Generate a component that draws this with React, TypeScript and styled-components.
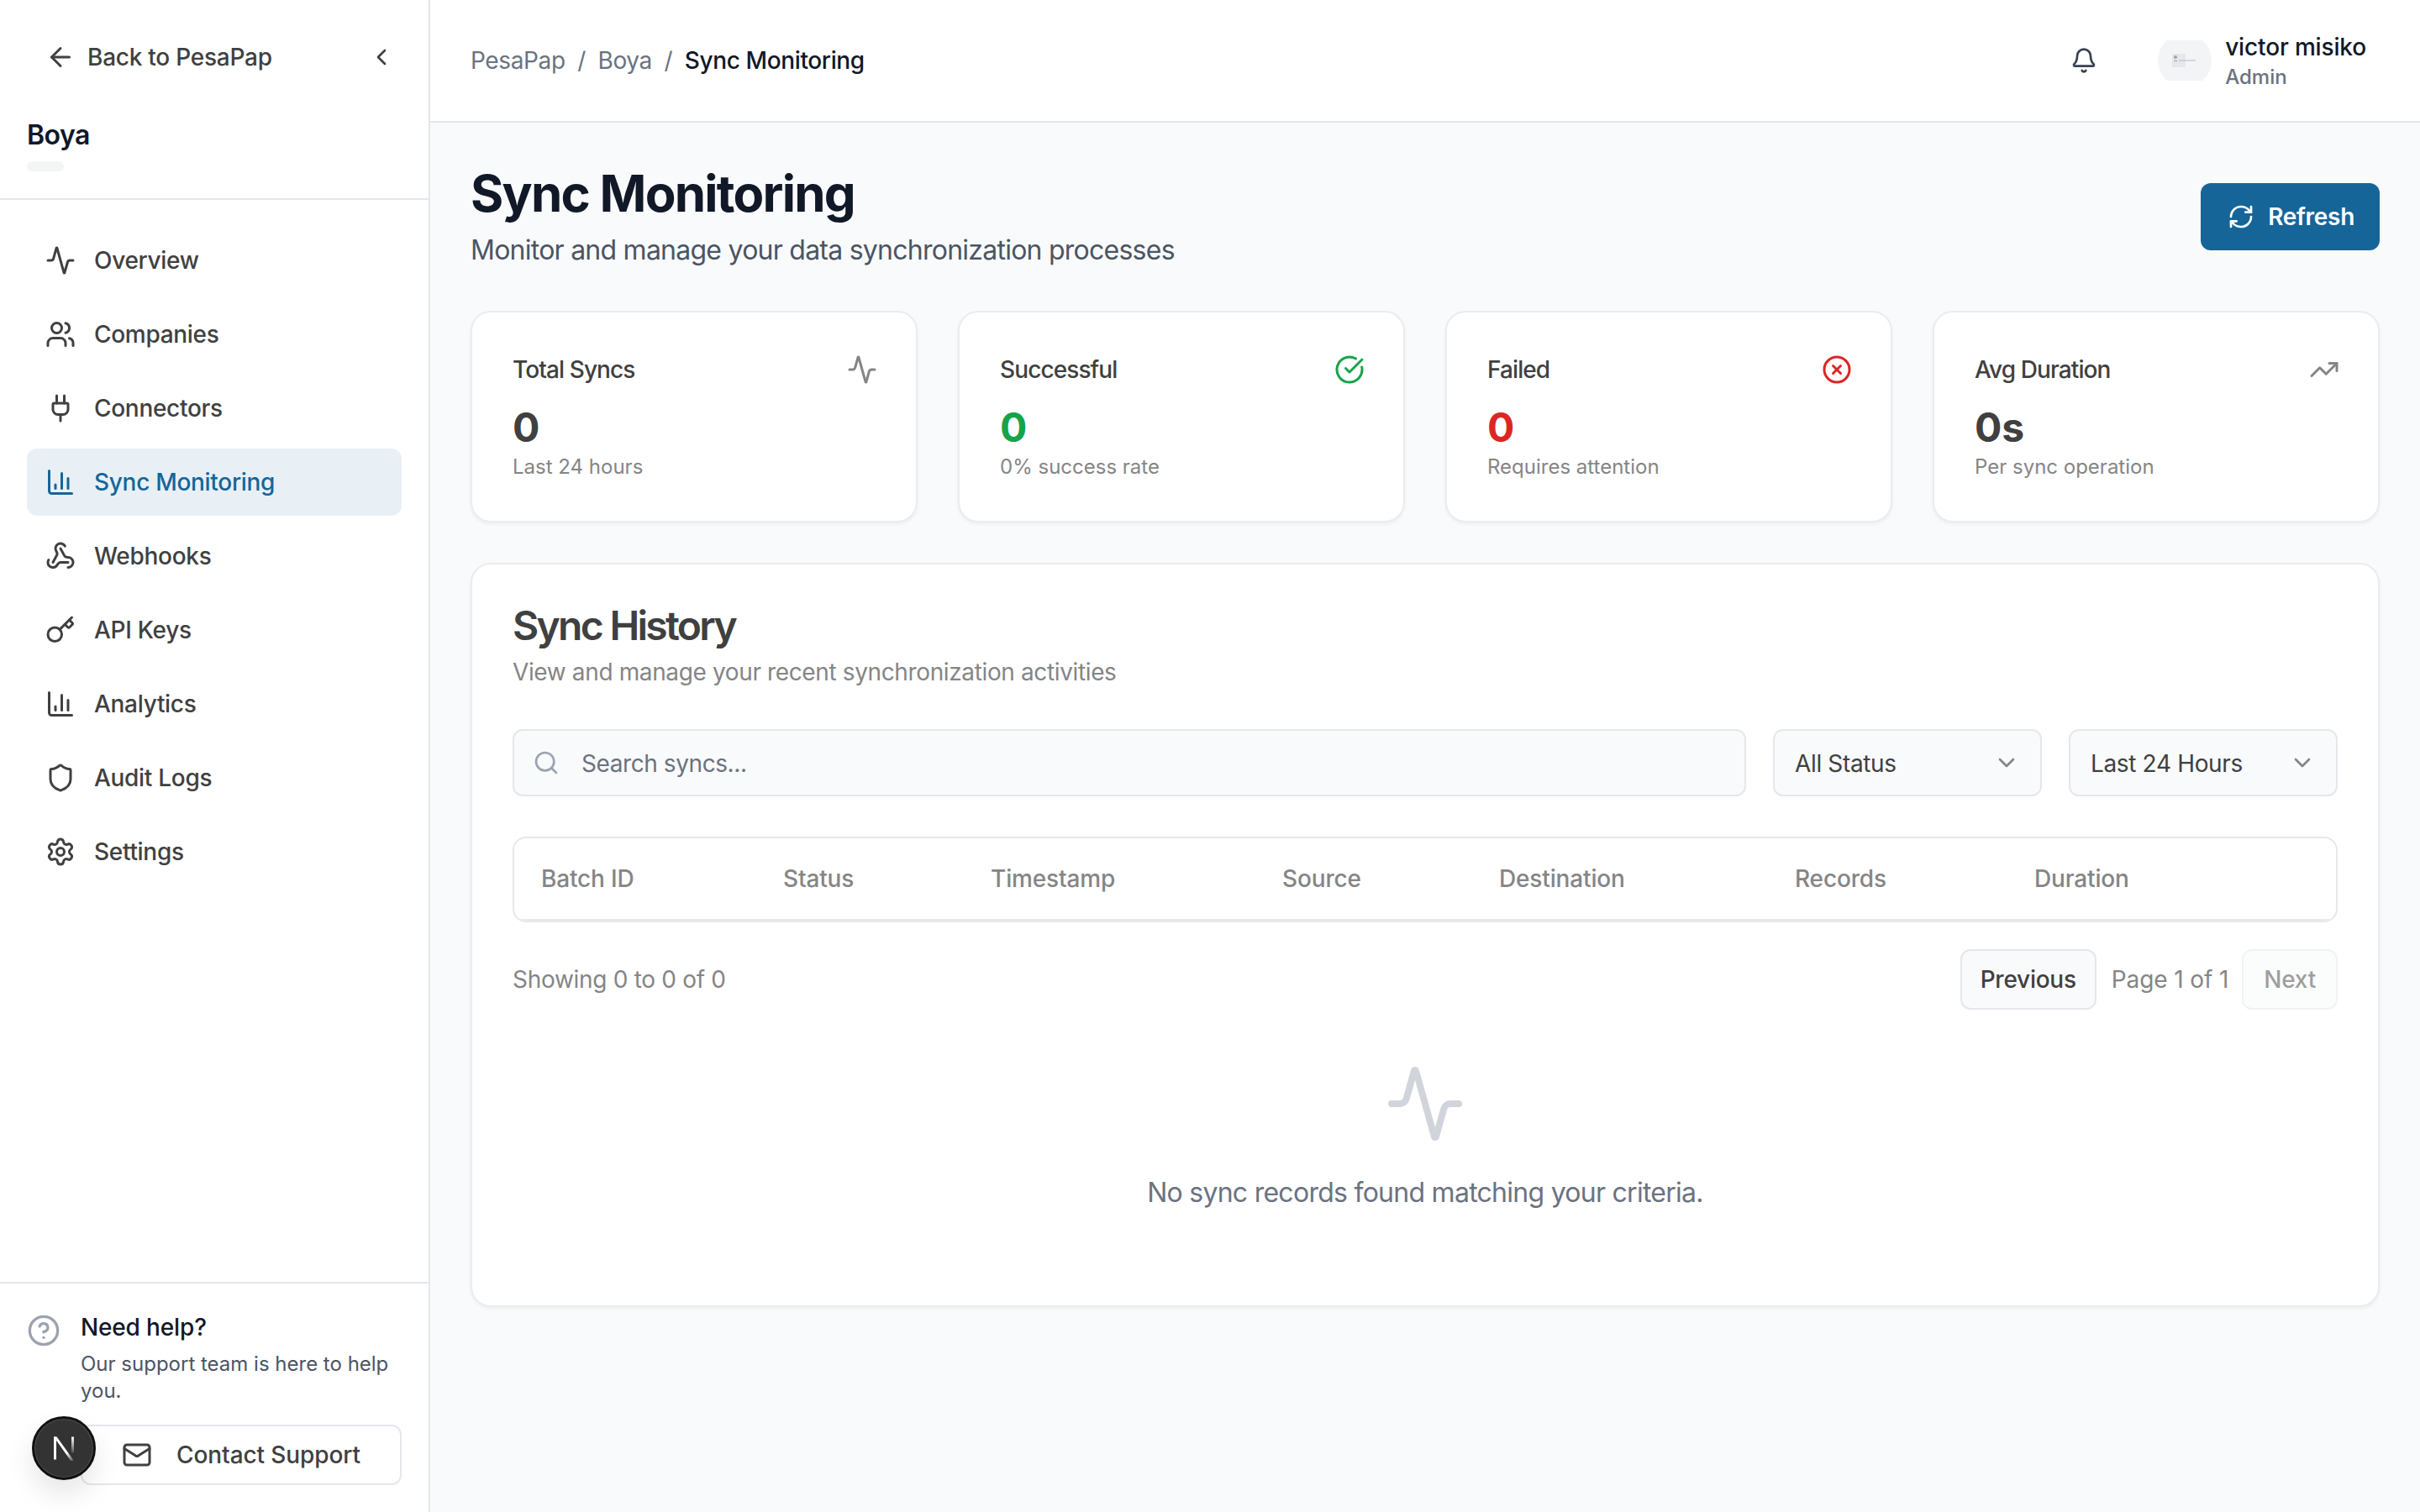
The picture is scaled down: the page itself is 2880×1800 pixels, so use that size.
import * as React from 'react'
import styled, { createGlobalStyle } from 'styled-components'
import {
  Activity,
  ArrowLeft,
  Bell,
  ChartColumn,
  ChevronDown,
  ChevronLeft,
  CircleCheckBig,
  CircleHelp,
  CircleX,
  Key,
  Mail,
  Plug,
  RefreshCw,
  Search,
  Settings,
  Shield,
  TrendingUp,
  Users,
  Webhook,
} from 'lucide-react'

const BRAND = '#166599'

const navItems = [
  { label: 'Overview', icon: Activity },
  { label: 'Companies', icon: Users },
  { label: 'Connectors', icon: Plug },
  { label: 'Sync Monitoring', icon: ChartColumn, active: true },
  { label: 'Webhooks', icon: Webhook },
  { label: 'API Keys', icon: Key },
  { label: 'Analytics', icon: ChartColumn },
  { label: 'Audit Logs', icon: Shield },
  { label: 'Settings', icon: Settings },
]

const stats = [
  { title: 'Total Syncs', value: '0', note: 'Last 24 hours', icon: Activity, tone: '#858585', valueTone: '#404040' },
  { title: 'Successful', value: '0', note: '0% success rate', icon: CircleCheckBig, tone: '#16a34a', valueTone: '#16a34a' },
  { title: 'Failed', value: '0', note: 'Requires attention', icon: CircleX, tone: '#dc2626', valueTone: '#dc2626' },
  { title: 'Avg Duration', value: '0s', note: 'Per sync operation', icon: TrendingUp, tone: '#858585', valueTone: '#404040' },
]

const columns = ['Batch ID', 'Status', 'Timestamp', 'Source', 'Destination', 'Records', 'Duration']

const App = () => (
  <Page>
    <GlobalStyle />
    <Sidebar>
      <SidebarTop>
        <BackRow>
          <BackLink>
            <ArrowLeft size={36} strokeWidth={2} />
            Back to PesaPap
          </BackLink>
          <ChevronLeft size={32} />
        </BackRow>
        <CompanyName>Boya</CompanyName>
        <CompanyPill />
      </SidebarTop>
      <Nav>
        {navItems.map(item => (
          <NavItem key={item.label} $active={item.active}>
            <item.icon size={36} />
            {item.label}
          </NavItem>
        ))}
      </Nav>
      <SidebarFooter>
        <HelpIcon>
          <CircleHelp size={40} />
        </HelpIcon>
        <HelpBody>
          <HelpTitle>Need help?</HelpTitle>
          <HelpText>Our support team is here to help you.</HelpText>
          <ContactButton>
            <Mail size={36} />
            Contact Support
          </ContactButton>
        </HelpBody>
      </SidebarFooter>
    </Sidebar>

    <Main>
      <TopBar>
        <Breadcrumbs>
          <Crumb>PesaPap</Crumb>
          <Crumb>/</Crumb>
          <Crumb>Boya</Crumb>
          <Crumb>/</Crumb>
          <Crumb $current>Sync Monitoring</Crumb>
        </Breadcrumbs>
        <TopActions>
          <Bell size={32} color="#374151" />
          <UserBlock>
            <Avatar>
              <AvatarThumb>
                <svg width="30" height="16" viewBox="0 0 30 16">
                  <circle cx="4" cy="4" r="2" fill="#9ca3af" />
                  <rect x="2" y="8" width="4" height="1" fill="#9ca3af" />
                  <rect x="8" y="7.5" width="20" height="1" fill="#b6bac2" />
                </svg>
              </AvatarThumb>
            </Avatar>
            <UserText>
              <UserName>victor misiko</UserName>
              <UserRole>Admin</UserRole>
            </UserText>
          </UserBlock>
        </TopActions>
      </TopBar>

      <Content>
        <PageHead>
          <div>
            <PageTitle>Sync Monitoring</PageTitle>
            <PageSubtitle>Monitor and manage your data synchronization processes</PageSubtitle>
          </div>
          <RefreshButton>
            <RefreshCw size={32} />
            Refresh
          </RefreshButton>
        </PageHead>

        <StatGrid>
          {stats.map(stat => (
            <StatCard key={stat.title}>
              <StatHead>
                <StatTitle>{stat.title}</StatTitle>
                <stat.icon size={36} color={stat.tone} />
              </StatHead>
              <StatValue $tone={stat.valueTone}>{stat.value}</StatValue>
              <StatNote>{stat.note}</StatNote>
            </StatCard>
          ))}
        </StatGrid>

        <HistoryCard>
          <HistoryTitle>Sync History</HistoryTitle>
          <HistorySubtitle>View and manage your recent synchronization activities</HistorySubtitle>

          <Filters>
            <SearchBox>
              <Search size={32} color="#9ca3af" />
              Search syncs...
            </SearchBox>
            <SelectBox>
              All Status
              <ChevronDown size={32} color="#858585" />
            </SelectBox>
            <SelectBox>
              Last 24 Hours
              <ChevronDown size={32} color="#858585" />
            </SelectBox>
          </Filters>

          <TableFrame>
            <HeaderRow>
              {columns.map(col => (
                <HeaderCell key={col}>{col}</HeaderCell>
              ))}
            </HeaderRow>
          </TableFrame>

          <Pagination>
            <PageInfo>Showing 0 to 0 of 0</PageInfo>
            <PageControls>
              <PageButton>Previous</PageButton>
              <PageLabel>Page 1 of 1</PageLabel>
              <PageButton $disabled>Next</PageButton>
            </PageControls>
          </Pagination>

          <EmptyState>
            <Activity size={96} color="#d1d5db" />
            <EmptyText>No sync records found matching your criteria.</EmptyText>
          </EmptyState>
        </HistoryCard>
      </Content>
    </Main>

    <DevBadge>
      <svg width="32" height="32" viewBox="0 0 32 32" fill="none">
        <defs>
          <linearGradient id="nDiag" x1="0" y1="0" x2="1" y2="1">
            <stop offset="0.65" stopColor="#fff" />
            <stop offset="1" stopColor="#fff" stopOpacity="0.1" />
          </linearGradient>
          <linearGradient id="nStem" x1="0" y1="0" x2="0" y2="1">
            <stop offset="0" stopColor="#fff" />
            <stop offset="1" stopColor="#fff" stopOpacity="0.15" />
          </linearGradient>
        </defs>
        <path d="M4 2.5h3v27H4z" fill="#fff" />
        <path d="M4 2.5h3.6L28 31h-3.8z" fill="url(#nDiag)" />
        <rect x="25" y="2.5" width="3" height="19" fill="url(#nStem)" />
      </svg>
    </DevBadge>
  </Page>
)

export default App

const GlobalStyle = createGlobalStyle`
  * {
    box-sizing: border-box;
  }

  html,
  body {
    margin: 0;
    padding: 0;
    background: #f9fafb;
    font-family: Inter, 'Liberation Sans', sans-serif;
    -webkit-font-smoothing: antialiased;
  }
`

const Page = styled.div`
  position: relative;
  display: flex;
  width: 100%;
  height: 100vh;
  overflow: hidden;
`

const Sidebar = styled.aside`
  display: flex;
  flex-direction: column;
  flex: 0 0 512px;
  background: #fff;
  border-right: 2px solid #e5e7eb;
`

const SidebarTop = styled.div`
  padding: 48px 32px 32px;
  border-bottom: 2px solid #e5e7eb;
`

const BackRow = styled.div`
  display: flex;
  align-items: center;
  justify-content: space-between;
  height: 40px;
  padding: 0 8px 0 22px;
  color: #404040;
`

const BackLink = styled.div`
  display: flex;
  align-items: center;
  gap: 14px;
  font-size: 28px;
  font-weight: 500;
  letter-spacing: -0.25px;
`

const CompanyName = styled.div`
  margin-top: 48px;
  font-size: 32px;
  line-height: 50px;
  font-weight: 600;
  letter-spacing: -0.5px;
  color: #111827;
`

const CompanyPill = styled.div`
  width: 44px;
  height: 12px;
  margin-top: 6px;
  border-radius: 6px;
  background: #f3f4f6;
`

const Nav = styled.nav`
  display: flex;
  flex-direction: column;
  flex: 1;
  gap: 8px;
  padding: 32px 32px 0;
`

const NavItem = styled.a<{ $active?: boolean }>`
  display: flex;
  align-items: center;
  gap: 22px;
  height: 80px;
  padding: 0 22px;
  border-radius: 12px;
  font-size: 28px;
  font-weight: 500;
  letter-spacing: -0.3px;
  color: ${p => (p.$active ? BRAND : '#404040')};
  background: ${p => (p.$active ? '#e8f0f5' : 'transparent')};
`

const SidebarFooter = styled.div`
  display: flex;
  gap: 24px;
  padding: 32px;
  border-top: 2px solid #e5e7eb;
`

const HelpIcon = styled.div`
  flex: none;
  height: 40px;
  margin-top: 4px;
  color: #9ca3af;
`

const HelpBody = styled.div`
  flex: 1;
`

const HelpTitle = styled.div`
  font-size: 28px;
  line-height: 40px;
  font-weight: 500;
  letter-spacing: -0.15px;
  color: #111827;
`

const HelpText = styled.p`
  margin: 8px 0 0;
  font-size: 24px;
  line-height: 32px;
  color: #4b5563;
`

const ContactButton = styled.button`
  display: flex;
  align-items: center;
  justify-content: center;
  gap: 29px;
  width: 100%;
  height: 72px;
  margin-top: 24px;
  background: #fff;
  border: 2px solid #e5e7eb;
  border-radius: 12px;
  font: 500 28px Inter, sans-serif;
  letter-spacing: -0.1px;
  color: #404040;
`

const Main = styled.main`
  display: flex;
  flex-direction: column;
  flex: 1;
  min-width: 0;
`

const TopBar = styled.header`
  display: flex;
  align-items: center;
  justify-content: space-between;
  flex: none;
  height: 146px;
  padding: 0 64px 0 48px;
  background: #fff;
  border-bottom: 2px solid #e5e7eb;
`

const Breadcrumbs = styled.div`
  display: flex;
  align-items: center;
  gap: 14.6px;
`

const Crumb = styled.span<{ $current?: boolean }>`
  font-size: 28px;
  letter-spacing: -0.38px;
  font-weight: ${p => (p.$current ? 500 : 400)};
  color: ${p => (p.$current ? '#111827' : '#6b7280')};
`

const TopActions = styled.div`
  display: flex;
  align-items: center;
  gap: 72px;
`

const UserBlock = styled.div`
  display: flex;
  align-items: center;
  gap: 16px;
`

const Avatar = styled.div`
  position: relative;
  display: flex;
  align-items: center;
  justify-content: center;
  width: 64px;
  height: 48px;
  overflow: hidden;

  &::before {
    content: '';
    position: absolute;
    top: -8px;
    left: 0;
    width: 64px;
    height: 64px;
    border-radius: 50%;
    background: #f3f4f6;
  }
`

const AvatarThumb = styled.div`
  position: relative;
  display: flex;
  width: 30px;
  height: 16px;
  background: linear-gradient(90deg, #e5e7eb 55%, transparent 55%);
`

const UserText = styled.div`
  display: flex;
  flex-direction: column;
  padding-top: 2px;
`

const UserName = styled.div`
  font-size: 28px;
  line-height: 36px;
  font-weight: 500;
  letter-spacing: -0.15px;
  color: #111827;
`

const UserRole = styled.div`
  margin-top: 2px;
  font-size: 24px;
  line-height: 32px;
  font-weight: 500;
  color: #6b7280;
`

const Content = styled.div`
  flex: 1;
  padding: 48px;
`

const PageHead = styled.div`
  display: flex;
  align-items: center;
  justify-content: space-between;
  margin-bottom: 48px;
`

const PageTitle = styled.h1`
  margin: 0;
  font-size: 60px;
  line-height: 72px;
  font-weight: 700;
  letter-spacing: -1.75px;
  color: #111827;
`

const PageSubtitle = styled.p`
  margin: 8px 0 0;
  font-size: 32px;
  line-height: 48px;
  letter-spacing: -0.75px;
  color: #4b5563;
`

const RefreshButton = styled.button`
  display: flex;
  align-items: center;
  gap: 16px;
  height: 80px;
  padding: 0 30px 0 32px;
  background: ${BRAND};
  border: 0;
  border-radius: 12px;
  font: 600 28px Inter, sans-serif;
  letter-spacing: -0.3px;
  color: #fff;
`

const StatGrid = styled.div`
  display: grid;
  grid-template-columns: repeat(4, 1fr);
  gap: 48px;
  margin-bottom: 48px;
`

const StatCard = styled.div`
  padding: 48px;
  background: #fff;
  border: 2px solid #ececec;
  border-radius: 24px;
  box-shadow: 0 2px 4px rgba(0, 0, 0, 0.05);
`

const StatHead = styled.div`
  display: flex;
  align-items: center;
  justify-content: space-between;
  height: 40px;
  margin-right: -2px;
`

const StatTitle = styled.div`
  font-size: 28px;
  font-weight: 500;
  letter-spacing: -0.9px;
  color: #404040;
`

const StatValue = styled.div<{ $tone: string }>`
  margin-top: 18px;
  font-size: 48px;
  line-height: 62px;
  font-weight: 700;
  color: ${p => p.$tone};
`

const StatNote = styled.div`
  font-size: 24px;
  line-height: 32px;
  color: #858585;
`

const HistoryCard = styled(StatCard)``

const HistoryTitle = styled.h2`
  margin: 0;
  font-size: 48px;
  line-height: 50px;
  font-weight: 600;
  letter-spacing: -2.7px;
  color: #404040;
`

const HistorySubtitle = styled.p`
  margin: 10px 0 48px;
  font-size: 28px;
  line-height: 40px;
  letter-spacing: -0.37px;
  color: #858585;
`

const Filters = styled.div`
  display: flex;
  gap: 32px;
  margin-bottom: 48px;
`

const SearchBox = styled.div`
  display: flex;
  align-items: center;
  flex: 1;
  gap: 26px;
  height: 80px;
  padding: 2px 22px 0;
  background: #f9fafb;
  border: 2px solid #e5e7eb;
  border-radius: 12px;
  font-size: 28px;
  letter-spacing: -0.42px;
  color: #6b7280;

  svg {
    margin-top: -2px;
  }
`

const SelectBox = styled.div`
  display: flex;
  align-items: center;
  justify-content: space-between;
  flex: 0 0 320px;
  height: 80px;
  padding: 2px 24px 0;
  background: #f9fafb;
  border: 2px solid #e5e7eb;
  border-radius: 12px;
  font-size: 28px;
  letter-spacing: -0.35px;
  color: #404040;

  svg {
    margin-top: -2px;
  }
`

const TableFrame = styled.div`
  border: 2px solid #e8e8e8;
  border-radius: 16px;
  overflow: hidden;
`

const HeaderRow = styled.div`
  display: grid;
  grid-template-columns: 288px 247px 347px 258px 352px 285px 1fr;
  align-items: center;
  height: 98px;
  border-bottom: 2px solid #e8e8e8;
`

const HeaderCell = styled.div`
  padding-left: 32px;
  font-size: 28px;
  font-weight: 500;
  letter-spacing: -0.15px;
  color: #858585;
`

const Pagination = styled.div`
  display: flex;
  align-items: center;
  justify-content: space-between;
  margin-top: 32px;
`

const PageInfo = styled.span`
  font-size: 28px;
  letter-spacing: -0.3px;
  color: #858585;
`

const PageLabel = styled(PageInfo)`
  padding-left: 2px;
  letter-spacing: -0.1px;
`

const PageControls = styled.div`
  display: flex;
  align-items: center;
  gap: 16px;
`

const PageButton = styled.button<{ $disabled?: boolean }>`
  height: 72px;
  padding: 0 ${p => (p.$disabled ? '24px' : '22px')};
  background: #f9fafb;
  border: 2px solid #e5e7eb;
  border-radius: 12px;
  font: 500 28px Inter, sans-serif;
  letter-spacing: -0.25px;
  color: #404040;
  opacity: ${p => (p.$disabled ? 0.5 : 1)};
`

const EmptyState = styled.div`
  display: flex;
  flex-direction: column;
  align-items: center;
  gap: 32px;
  padding: 64px 0 62px;
`

const EmptyText = styled.p`
  margin: 0;
  padding-top: 2px;
  font-size: 32px;
  line-height: 48px;
  letter-spacing: -0.73px;
  color: #6b7280;
`

const DevBadge = styled.div`
  position: absolute;
  left: 38px;
  top: 1686px;
  display: flex;
  align-items: center;
  justify-content: center;
  width: 76px;
  height: 76px;
  border-radius: 50%;
  background: #333;
  border: 3px solid #111;
  box-shadow: inset 0 0 0 1px rgba(255, 255, 255, 0.15), 0 16px 32px rgba(0, 0, 0, 0.1);
`
